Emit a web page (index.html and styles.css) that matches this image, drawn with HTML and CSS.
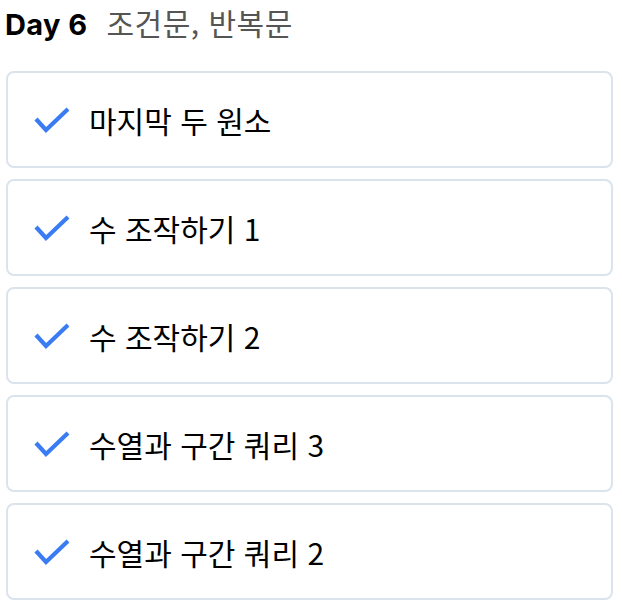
FILE: index.html
```html
<!DOCTYPE html>
<html lang="ko">
<head>
<meta charset="utf-8">
<link rel="stylesheet" href="styles.css">
</head>
<body>
<div class="page">
  <h2 class="title"><span class="day">Day 6</span><span class="topic">조건문, 반복문</span></h2>
  <ul class="list">
    <li class="item"><svg class="check" viewBox="0 0 36 26"><path d="M2 12 L12 23 L34 2"/></svg><span class="label">마지막 두 원소</span></li>
    <li class="item"><svg class="check" viewBox="0 0 36 26"><path d="M2 12 L12 23 L34 2"/></svg><span class="label">수 조작하기 1</span></li>
    <li class="item"><svg class="check" viewBox="0 0 36 26"><path d="M2 12 L12 23 L34 2"/></svg><span class="label">수 조작하기 2</span></li>
    <li class="item"><svg class="check" viewBox="0 0 36 26"><path d="M2 12 L12 23 L34 2"/></svg><span class="label">수열과 구간 쿼리 3</span></li>
    <li class="item"><svg class="check" viewBox="0 0 36 26"><path d="M2 12 L12 23 L34 2"/></svg><span class="label">수열과 구간 쿼리 2</span></li>
  </ul>
</div>
</body>
</html>
```
FILE: styles.css
```css
html, body { margin: 0; padding: 0; background: #fff; }
body { font-family: Inter, "Noto Sans", "Noto Sans CJK KR", sans-serif; }
.page { padding: 0 9px 0 6px; }
.title { margin: 0 0 0 -1px; font-size: 29px; line-height: 44px; height: 71px; display: flex; align-items: baseline; gap: 19px; }
.day { font-weight: 700; color: #000; letter-spacing: 0.4px; }
.topic { font-weight: 400; font-size: 30px; color: #555; font-family: "Noto Sans CJK KR", sans-serif; letter-spacing: 0.5px; }
.list { list-style: none; margin: 0; padding: 0; display: flex; flex-direction: column; gap: 11px; }
.item { height: 93px; border: 2px solid #dbe3ec; border-radius: 8px; display: flex; align-items: center; padding-left: 26px; }
.check { width: 36px; height: 26px; flex: none; margin-right: 19px; }
.check path { fill: none; stroke: #3a7cf3; stroke-width: 4.2; }
.label { font-size: 30px; color: #000; font-family: "Noto Sans CJK KR", sans-serif; }
```
